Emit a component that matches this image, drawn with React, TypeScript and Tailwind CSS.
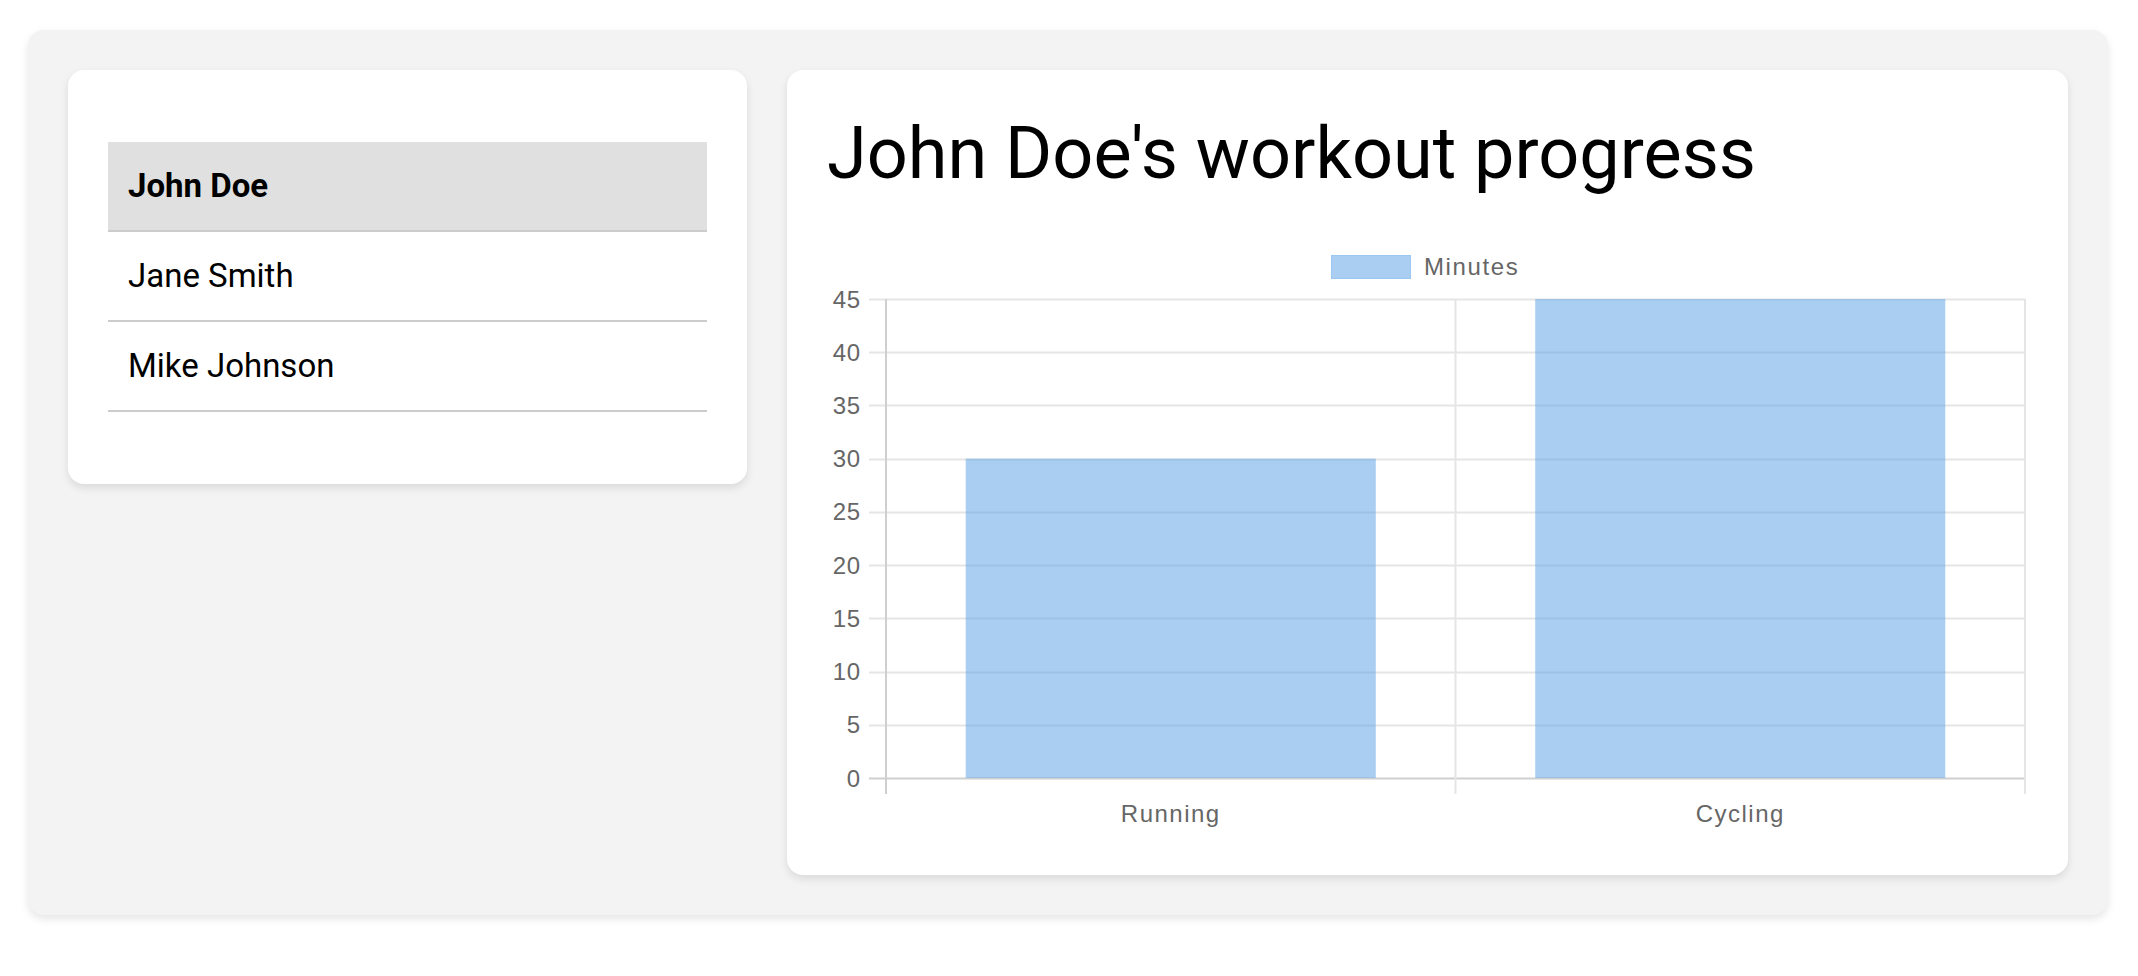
import React, { useState } from 'react';

interface Workout {
  name: string;
  minutes: number;
}

interface Member {
  id: number;
  name: string;
  workouts: Workout[];
}

const MEMBERS: Member[] = [
  { id: 1, name: 'John Doe', workouts: [{ name: 'Running', minutes: 30 }, { name: 'Cycling', minutes: 45 }] },
  { id: 2, name: 'Jane Smith', workouts: [{ name: 'Swimming', minutes: 60 }, { name: 'Running', minutes: 20 }] },
  { id: 3, name: 'Mike Johnson', workouts: [{ name: 'Yoga', minutes: 50 }, { name: 'Cycling', minutes: 40 }] },
];

// chart geometry (canvas-ish coordinates)
const W = 1199;
const H = 600;
const PLOT_LEFT = 59;
const PLOT_RIGHT = 1198;
const PLOT_TOP = 64;
const PLOT_BOTTOM = 543;

const WorkoutChart: React.FC<{ workouts: Workout[] }> = ({ workouts }) => {
  const max = Math.ceil(Math.max(...workouts.map(w => w.minutes)) / 5) * 5;
  const steps = max / 5;
  const stepH = (PLOT_BOTTOM - PLOT_TOP) / steps;
  const catW = (PLOT_RIGHT - PLOT_LEFT) / workouts.length;
  const barW = catW * 0.72;
  const ticks = Array.from({ length: steps + 1 }, (_, i) => i * 5);

  return (
    <svg width={W} height={H} viewBox={`0 0 ${W} ${H}`} className="block">
      {/* legend */}
      <rect x={504} y={20} width={80} height={24} fill="rgba(84,158,230,0.5)" />
      <rect x={504.5} y={20.5} width={79} height={23} fill="none" stroke="rgba(84,158,230,0.15)" />
      <text x={597} y={40} fontSize={24} fill="#666" letterSpacing="1.6" fontFamily="'Liberation Sans', Arial, sans-serif">
        Minutes
      </text>

      {/* horizontal grid + y labels */}
      {ticks.map(t => {
        const y = PLOT_BOTTOM - (t / 5) * stepH;
        return (
          <g key={t}>
            <line
              x1={42}
              x2={PLOT_RIGHT}
              y1={Math.round(y) + 0.5}
              y2={Math.round(y) + 0.5}
              stroke={t === 0 ? '#cfcfcf' : '#e5e5e5'}
              strokeWidth={2}
            />
            <text
              x={34}
              y={y + 8.5}
              fontSize={24}
              fill="#666"
              textAnchor="end"
              letterSpacing="0.8"
              fontFamily="'Liberation Sans', Arial, sans-serif"
            >
              {t}
            </text>
          </g>
        );
      })}

      {/* vertical grid */}
      {Array.from({ length: workouts.length + 1 }, (_, i) => {
        const x = PLOT_LEFT + i * catW;
        return (
          <line
            key={i}
            x1={x}
            x2={x}
            y1={PLOT_TOP}
            y2={PLOT_BOTTOM + 16}
            stroke={i === 0 ? '#cfcfcf' : '#e5e5e5'}
            strokeWidth={2}
          />
        );
      })}

      {/* bars */}
      {workouts.map((w, i) => {
        const cx = PLOT_LEFT + catW * (i + 0.5);
        const top = PLOT_BOTTOM - (w.minutes / 5) * stepH;
        return (
          <g key={w.name}>
            <rect x={cx - barW / 2} y={top} width={barW} height={PLOT_BOTTOM - top} fill="rgba(84,158,230,0.5)" />
            <text
              x={cx}
              y={587}
              fontSize={24}
              fill="#666"
              textAnchor="middle"
              letterSpacing="1.5"
              fontFamily="'Liberation Sans', Arial, sans-serif"
            >
              {w.name}
            </text>
          </g>
        );
      })}
    </svg>
  );
};

export default function App() {
  const [selectedId, setSelectedId] = useState(1);
  const selected = MEMBERS.find(m => m.id === selectedId) || MEMBERS[0];

  return (
    <div className="min-h-screen bg-white font-['Roboto',sans-serif]">
      <div className="mt-[30px] ml-[28px] mr-[30px] flex items-start gap-[40px] rounded-[16px] bg-[#f3f3f3] p-[40px] shadow-[0_4px_8px_rgba(0,0,0,0.1)]">
        {/* Member list */}
        <div className="w-[679px] flex-shrink-0 rounded-[16px] bg-white p-[40px] shadow-[0_4px_8px_rgba(0,0,0,0.1)]">
          <ul className="my-[32px]">
            {MEMBERS.map(m => (
              <li
                key={m.id}
                onClick={() => setSelectedId(m.id)}
                className={`cursor-pointer border-b-2 border-[#cccccc] px-[20px] py-[24px] text-[33px] leading-[40px] text-black ${
                  m.id === selectedId ? 'bg-[#e0e0e0] font-bold' : ''
                }`}
              >
                {m.name}
              </li>
            ))}
          </ul>
        </div>

        {/* Progress */}
        <div className="flex-1 min-w-0 rounded-[16px] bg-white p-[40px] shadow-[0_4px_8px_rgba(0,0,0,0.1)]">
          <h1 className="mb-[38px] text-[72px] leading-[87px] font-normal text-black">
            {selected.name}'s workout progress
          </h1>
          <WorkoutChart workouts={selected.workouts} />
        </div>
      </div>
    </div>
  );
}
